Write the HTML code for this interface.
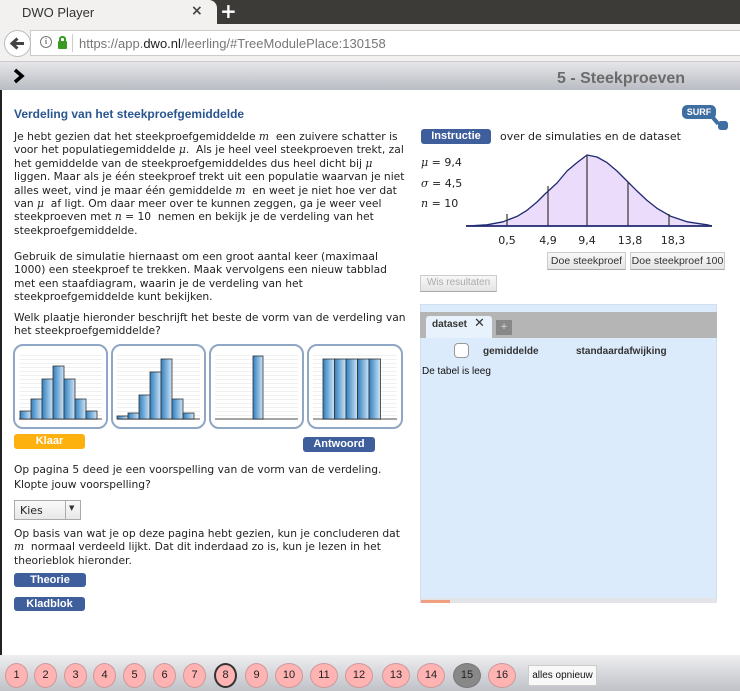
<!DOCTYPE html>
<html><head><meta charset="utf-8"><style>
*{margin:0;padding:0;box-sizing:border-box}
body{width:740px;height:691px;overflow:hidden;position:relative;background:#fff;font-family:"DejaVu Sans",sans-serif;font-size:11px;color:#222}
.a{position:absolute}
.btn{position:absolute;background:#3f5e9c;color:#fff;font:bold 11px "Liberation Sans",sans-serif;text-align:center;border-radius:3px}
p.t{position:absolute;left:14px;white-space:nowrap;line-height:13.4px;font-size:10.7px;color:#222}
p.u{line-height:15px}
i{font-family:"DejaVu Serif",serif}
.gb{position:absolute;background:linear-gradient(#f8f8f8,#e4e4e4);border:1px solid #ccc;border-bottom-color:#aaa;font:10.5px "Liberation Sans",sans-serif;color:#333;text-align:center;white-space:nowrap}
.c{position:absolute;top:663px;height:25px;border-radius:50%;background:#ffb3b3;border:1px solid #c99;font:11px "Liberation Sans",sans-serif;text-align:center;line-height:23px;color:#222}
</style></head><body>
<div class="a" style="left:0;top:0;width:740px;height:24px;background:#3c3b37"></div>
<div class="a" style="left:0;top:0;width:217px;height:24px;background:#f2f1f0;border-radius:0 8px 0 0"></div>
<div class="a" style="left:22px;top:5px;font:13px 'Liberation Sans',sans-serif;color:#333">DWO Player</div>
<div class="a" style="left:191px;top:3px;font:bold 14px 'DejaVu Sans',sans-serif;color:#444">×</div>
<div class="a" style="left:220px;top:-1px;font:bold 20px 'DejaVu Sans',sans-serif;color:#fff">+</div>
<div class="a" style="left:0;top:24px;width:740px;height:38px;background:#f2f1f0;border-bottom:1px solid #ccc"></div>
<div class="a" style="left:30px;top:30px;width:710px;height:26px;background:#fff;border:1px solid #ccc;border-right:none"></div>
<div class="a" style="left:4px;top:30px;width:27px;height:27px;border-radius:50%;background:#fff;border:1px solid #bbb"></div>
<svg class="a" style="left:4px;top:30px" width="27" height="27"><path d="M20 13.5H9M13.5 8.5L8 13.5L13.5 18.5" stroke="#444" stroke-width="3" fill="none"/></svg>
<div class="a" style="left:40px;top:36px;width:12px;height:12px;border:1px solid #777;border-radius:50%;font:bold 8px 'Liberation Serif';text-align:center;line-height:10px;color:#777">i</div>
<div class="a" style="left:58px;top:41px;width:9px;height:8px;background:#3a9a24;border-radius:1px"></div>
<div class="a" style="left:59px;top:36px;width:7px;height:7px;border:2px solid #3a9a24;border-bottom:none;border-radius:3px 3px 0 0"></div>
<div class="a" style="left:72px;top:34px;width:1px;height:18px;background:#ccc"></div>
<div class="a" style="left:79px;top:36px;font:13px 'Liberation Sans',sans-serif;color:#777">https://app.<span style="color:#222">dwo.nl</span>/leerling/#TreeModulePlace:130158</div>
<div class="a" style="left:0;top:62px;width:740px;height:28px;background:linear-gradient(#e6e6e8,#b9bcc3)"></div>
<svg class="a" style="left:12px;top:68px" width="14" height="16"><path d="M3 2L10 8L3 14" stroke="#000" stroke-width="3.5" fill="none"/></svg>
<div class="a" style="left:557px;top:70px;font:bold 16px 'Liberation Sans',sans-serif;color:#6b6b6b">5 - Steekproeven</div>
<div class="a" style="left:0;top:90px;width:2px;height:565px;background:#222"></div>
<div class="a" style="left:14px;top:107px;font:bold 12px 'Liberation Sans',sans-serif;color:#2b5590">Verdeling van het steekproefgemiddelde</div>
<div class="a" style="left:682px;top:105px;width:34px;height:14px;background:#3f6ea3;border-radius:5px;color:#fff;font:bold 9px 'Liberation Sans';text-align:center;line-height:14px">SURF</div>
<div class="a" style="left:713px;top:115px;width:4px;height:10px;background:#3f6ea3;transform:rotate(-40deg)"></div>
<div class="a" style="left:718px;top:121px;width:10px;height:9px;background:#3f6ea3;border-radius:3px"></div>

<p class="t" style="top:130px">Je hebt gezien dat het steekproefgemiddelde <i>m</i>&nbsp; een zuivere schatter is<br>voor het populatiegemiddelde <i>μ</i>.&nbsp; Als je heel veel steekproeven trekt, zal<br>het gemiddelde van de steekproefgemiddeldes dus heel dicht bij <i>μ</i><br>liggen. Maar als je één steekproef trekt uit een populatie waarvan je niet<br>alles weet, vind je maar één gemiddelde <i>m</i>&nbsp; en weet je niet hoe ver dat<br>van <i>μ</i>&nbsp; af ligt. Om daar meer over te kunnen zeggen, ga je weer veel<br>steekproeven met <i>n</i> = 10&nbsp; nemen en bekijk je de verdeling van het<br>steekproefgemiddelde.</p>
<p class="t" style="top:250px">Gebruik de simulatie hiernaast om een groot aantal keer (maximaal<br>1000) een steekproef te trekken. Maak vervolgens een nieuw tabblad<br>met een staafdiagram, waarin je de verdeling van het<br>steekproefgemiddelde kunt bekijken.</p>
<p class="t" style="top:311px">Welk plaatje hieronder beschrijft het beste de vorm van de verdeling van<br>het steekproefgemiddelde?</p>

<svg class="a" style="left:0;top:0" width="410" height="440">
<defs><linearGradient id="bg" x1="0" x2="1"><stop offset="0" stop-color="#2f7fc0"/><stop offset="1" stop-color="#cfe4f5"/></linearGradient>
<pattern id="ln" width="4" height="4" patternUnits="userSpaceOnUse"><rect width="4" height="4" fill="#fff"/><rect y="3" width="4" height="1" fill="#f0f0f0"/></pattern></defs>
<g stroke="#8fa6c4" stroke-width="2" fill="#fff">
<rect x="14" y="345" width="93" height="83" rx="9"/><rect x="112" y="345" width="93" height="83" rx="9"/><rect x="210" y="345" width="93" height="83" rx="9"/><rect x="308" y="345" width="94" height="83" rx="9"/></g>
<g fill="url(#ln)"><rect x="19" y="352" width="83" height="67"/><rect x="117" y="352" width="83" height="67"/><rect x="215" y="352" width="83" height="67"/><rect x="313" y="352" width="84" height="67"/></g>
<g stroke="#888" stroke-width="1.5"><line x1="19" y1="419" x2="102" y2="419"/><line x1="117" y1="419" x2="200" y2="419"/><line x1="215" y1="419" x2="298" y2="419"/><line x1="313" y1="419" x2="397" y2="419"/></g>
<g fill="url(#bg)" stroke="#333" stroke-width="0.8">
<rect x="20" y="411" width="11" height="8"/><rect x="31" y="399" width="11" height="20"/><rect x="42" y="379" width="11" height="40"/><rect x="53" y="366" width="11" height="53"/><rect x="64" y="379" width="11" height="40"/><rect x="75" y="399" width="11" height="20"/><rect x="86" y="411" width="11" height="8"/>
<rect x="117" y="416" width="11" height="3"/><rect x="128" y="413" width="11" height="6"/><rect x="139" y="395" width="11" height="24"/><rect x="150" y="372" width="11" height="47"/><rect x="161" y="359" width="11" height="60"/><rect x="172" y="399" width="11" height="20"/><rect x="183" y="413" width="11" height="6"/>
<rect x="253" y="356" width="10" height="63"/>
<rect x="323" y="359" width="11.5" height="60"/><rect x="334.5" y="359" width="11.5" height="60"/><rect x="346" y="359" width="11.5" height="60"/><rect x="357.5" y="359" width="11.5" height="60"/><rect x="369" y="359" width="11.5" height="60"/>
</g></svg>
<div class="btn" style="left:14px;top:434px;width:71px;height:15px;background:#fdb10f;line-height:15px">Klaar</div>
<div class="btn" style="left:303px;top:437px;width:72px;height:15px;line-height:15px">Antwoord</div>
<p class="t u" style="top:462px">Op pagina 5 deed je een voorspelling van de vorm van de verdeling.<br>Klopte jouw voorspelling?</p>
<div class="a" style="left:14px;top:500px;width:67px;height:20px;border:1px solid #aaa;background:linear-gradient(#fafafa,#e8e8e8)"></div>
<div class="a" style="left:20px;top:504px;font-size:11px">Kies</div>
<div class="a" style="left:65px;top:500px;width:1px;height:20px;background:#aaa"></div>
<div class="a" style="left:69px;top:504px;font-size:7px;color:#333">▼</div>
<p class="t" style="top:527px">Op basis van wat je op deze pagina hebt gezien, kun je concluderen dat<br><i>m</i>&nbsp; normaal verdeeld lijkt. Dat dit inderdaad zo is, kun je lezen in het<br>theorieblok hieronder.</p>
<div class="btn" style="left:14px;top:573px;width:72px;height:14px;line-height:14px">Theorie</div>
<div class="btn" style="left:14px;top:597px;width:71px;height:14px;line-height:14px">Kladblok</div>

<div class="btn" style="left:421px;top:129px;width:70px;height:15px;line-height:15px">Instructie</div>
<div class="a" style="left:500px;top:130px;font-size:11px">over de simulaties en de dataset</div>
<div class="a" style="left:421px;top:153px;line-height:20.5px;font-size:11px"><i>μ</i> = 9,4<br><i>σ</i> = 4,5<br><i>n</i> = 10</div>
<svg class="a" style="left:0;top:0" width="740" height="250">
<path d="M467 226 L487 224.8 L503 221.8 L517 216.4 L527 210.3 L537 202 L545 194 L557 183 L567 171 L577 162.6 L587 155 L597 157 L607 162.6 L617 171 L629 183 L637 191 L647 200.4 L657 208.3 L671 216.4 L687 221.8 L707 224.8 L712 226 Z" fill="#eadcfa"/>
<path d="M467 226 L487 224.8 L503 221.8 L517 216.4 L527 210.3 L537 202 L545 194 L557 183 L567 171 L577 162.6 L587 155 L597 157 L607 162.6 L617 171 L629 183 L637 191 L647 200.4 L657 208.3 L671 216.4 L687 221.8 L707 224.8 L712 226" fill="none" stroke="#1f2a70" stroke-width="1.3" stroke-linejoin="round"/>
<g stroke="#333" stroke-width="1.2"><line x1="507" y1="226" x2="507" y2="214"/><line x1="548" y1="226" x2="548" y2="186"/><line x1="587" y1="226" x2="587" y2="155"/><line x1="628" y1="226" x2="628" y2="182"/><line x1="669" y1="226" x2="669" y2="214"/></g>
<line x1="466" y1="226" x2="712" y2="226" stroke="#1f2a70" stroke-width="1.8"/>
<g font-family="DejaVu Sans" font-size="11" fill="#222" text-anchor="middle"><text x="507" y="244">0,5</text><text x="548" y="244">4,9</text><text x="587" y="244">9,4</text><text x="630" y="244">13,8</text><text x="673" y="244">18,3</text></g>
</svg>
<div class="gb" style="left:547px;top:252px;width:79px;height:18px;line-height:16px">Doe steekproef</div>
<div class="gb" style="left:630px;top:252px;width:95px;height:18px;line-height:16px">Doe steekproef 100</div>
<div class="gb" style="left:420px;top:275px;width:77px;height:17px;line-height:14px;color:#aaa;font-size:10px">Wis resultaten</div>

<div class="a" style="left:420px;top:304px;width:297px;height:299px;background:#dcebfb;border:1px solid #cfdff0"></div>
<div class="a" style="left:420px;top:312px;width:297px;height:26px;background:#b5b5b5"></div>
<div class="a" style="left:426px;top:316px;width:66px;height:22px;background:#e8f2fc;border-radius:3px 3px 0 0"></div>
<div class="a" style="left:432px;top:319px;font:bold 10px 'Liberation Sans';color:#333">dataset</div>
<div class="a" style="left:474px;top:316px;font:bold 13px 'DejaVu Sans';color:#333">✕</div>
<div class="a" style="left:496px;top:320px;width:16px;height:15px;background:#888;color:#ddd;font-size:9px;text-align:center;line-height:15px">+</div>
<div class="a" style="left:454px;top:343px;width:15px;height:15px;border:1px solid #999;border-radius:4px;background:#fff"></div>
<div class="a" style="left:483px;top:346px;font:bold 10px 'Liberation Sans';color:#333">gemiddelde</div>
<div class="a" style="left:576px;top:346px;font:bold 10px 'Liberation Sans';color:#333">standaardafwijking</div>
<div class="a" style="left:422px;top:366px;font:10px 'Liberation Sans';color:#111">De tabel is leeg</div>
<div class="a" style="left:421px;top:598px;width:296px;height:5px;background:#e2e4e8"></div>
<div class="a" style="left:421px;top:600px;width:29px;height:3px;background:#f0a080"></div>

<div class="a" style="left:0;top:655px;width:740px;height:36px;background:linear-gradient(#eeeef0,#bfc2c8)"></div>
<div class="c" style="left:5px;width:23px">1</div><div class="c" style="left:34px;width:23px">2</div><div class="c" style="left:64px;width:23px">3</div><div class="c" style="left:93px;width:23px">4</div><div class="c" style="left:123px;width:23px">5</div><div class="c" style="left:153px;width:23px">6</div><div class="c" style="left:183px;width:23px">7</div>
<div class="c" style="left:214px;width:23px;border:2px solid #333;line-height:21px">8</div>
<div class="c" style="left:245px;width:23px">9</div><div class="c" style="left:275px;width:28px">10</div><div class="c" style="left:310px;width:28px">11</div><div class="c" style="left:345px;width:28px">12</div><div class="c" style="left:382px;width:28px">13</div><div class="c" style="left:417px;width:28px">14</div>
<div class="c" style="left:453px;width:28px;background:#888;border-color:#777">15</div>
<div class="c" style="left:488px;width:28px">16</div>
<div class="a" style="left:528px;top:665px;width:69px;height:21px;background:#f8f8f8;border:1px solid #ccc;font:10px 'Liberation Sans';text-align:center;line-height:19px;color:#111">alles opnieuw</div>
</body></html>
